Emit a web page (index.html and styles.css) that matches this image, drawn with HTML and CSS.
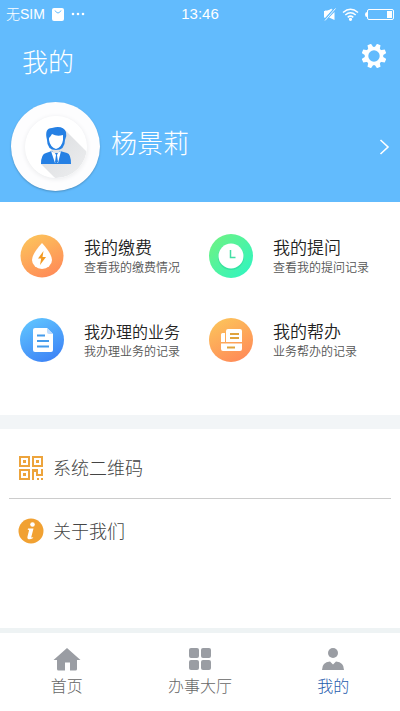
FILE: index.html
```html
<!DOCTYPE html>
<html lang="zh-CN">
<head>
<meta charset="utf-8">
<meta name="viewport" content="width=device-width, initial-scale=1">
<title>我的</title>
<link rel="stylesheet" href="styles.css">
</head>
<body>
<div class="app">
  <header class="hero">
    <div class="status">
      <div class="status-left">
        <span>无SIM</span>
        <svg width="12" height="13" viewBox="0 0 12 13"><rect width="12" height="13" rx="2" fill="#fff"/><path d="M3 2.500q3 5 6 0" fill="none" stroke="#62bbfd"/></svg>
        <svg width="14" height="4" viewBox="0 0 14 4" fill="#fff"><circle cx="2" cy="2" r="1.300"/><circle cx="7" cy="2" r="1.300"/><circle cx="12" cy="2" r="1.300"/></svg>
      </div>
      <time>13:46</time>
      <div class="status-right">
        <svg width="12" height="13" viewBox="0 0 12 13"><path d="M0 3h3l5-2.500L0 10zM10.500 4v8L5 9.500z" fill="#fff"/><path d="M8 1.500L1 9.500V3h3zM11.500 .5L1 12.500" fill="#fff" stroke="#fff" stroke-width=".9"/></svg>
        <svg width="17" height="13" viewBox="0 0 17 13" fill="none" stroke="#fff" stroke-width="1.500"><path d="M1 4.500q7.500-6.500 15 0M3.300 7q5.200-4.500 10.400 0M5.700 9.300q2.800-2.300 5.600 0"/><circle cx="8.500" cy="11.300" r=".9" fill="#fff"/></svg>
        <svg width="29" height="13" viewBox="0 0 29 13"><rect x="2.500" y="1.500" width="26" height="10" rx="1.500" fill="none" stroke="#fff"/><path d="M2 4Q0 4 0 6.500T2 9zM22 3h5v7h-5z" fill="#fff"/></svg>
      </div>
    </div>
    <div class="titlebar">
      <h1>我的</h1>
      <button class="settings" type="button" aria-label="设置">
        <svg width="24" height="24" viewBox="-12 -12 24 24">
          <g fill="#fff"><path id="tooth" d="M-2.800-8L-1.900-12.400h3.800L2.800-8z" transform="rotate(22.500)"/><use href="#tooth" transform="rotate(45)"/><use href="#tooth" transform="rotate(90)"/><use href="#tooth" transform="rotate(135)"/><use href="#tooth" transform="rotate(180)"/><use href="#tooth" transform="rotate(225)"/><use href="#tooth" transform="rotate(270)"/><use href="#tooth" transform="rotate(315)"/></g>
          <circle r="7.500" fill="none" stroke="#fff" stroke-width="3.600"/>
        </svg>
      </button>
    </div>
    <a class="profile" href="#profile">
      <span class="avatar">
        <svg width="62" height="62" viewBox="0 0 62 62">
          <defs><clipPath id="disc"><circle cx="31" cy="31" r="31"/></clipPath><linearGradient id="shade" x1="0" y1="0" x2="1" y2="1"><stop stop-color="#d8dadd"/><stop offset="1" stop-color="#f0f1f2"/></linearGradient></defs>
          <circle cx="31" cy="31" r="31" fill="#fff"/>
          <path clip-path="url(#disc)" d="M40 14L66 40V66H34L16 48z" fill="url(#shade)"/>
          <path d="M22 24Q19 12 27 12Q38 9 41 16Q42 20 40 24Q40 34 31 34Q22 34 22 24z" fill="#2580e4"/>
          <path d="M24 22Q26 20 27 18Q32 21 38 19V24Q37 31 31 33Q25 31 24 24z" fill="#fff"/>
          <path d="M16 48Q16 38 21 37L27 35L31 40L35 35L42 37Q46 38 46 48z" fill="#2580e4"/>
          <path d="M26 35L31 38L36 35L33 47H30z" fill="#fff"/><path d="M30 37h3l-1 2 1 7-2 2-1-2 1-7z" fill="#2580e4"/>
        </svg>
      </span>
      <span class="name">杨景莉</span>
      <svg width="11" height="18" viewBox="0 0 11 18"><path d="M1.500 2L9 9L1.500 16" fill="none" stroke="#fff" stroke-width="1.600"/></svg>
    </a>
  </header>

  <nav class="services" aria-label="我的服务">
    <a class="service" href="#payments">
      <svg width="44" height="44" viewBox="0 0 44 44"><defs><linearGradient id="orange" x1=".2" y1="0" x2=".7" y2="1"><stop stop-color="#fcc45b"/><stop offset="1" stop-color="#ff8b58"/></linearGradient></defs><circle cx="22" cy="22" r="21.500" fill="url(#orange)"/><path d="M22 9Q32 20 32 26A10 9 0 0 1 12 26Q12 20 22 9z" fill="#fff"/><path d="M23.500 17L18 24.500h3.200L20 31l6-8h-3.500z" fill="#f39a22"/></svg>
      <span class="service-text"><span class="service-title">我的缴费</span><span class="service-note">查看我的缴费情况</span></span>
    </a>
    <a class="service" href="#questions">
      <svg width="44" height="44" viewBox="0 0 44 44"><defs><linearGradient id="green" x1="0" y1="0" x2="1" y2="1"><stop stop-color="#73f27f"/><stop offset="1" stop-color="#2bf5c5"/></linearGradient></defs><circle cx="22" cy="22" r="22" fill="url(#green)"/><circle cx="22" cy="23" r="13" fill="#21cf99" opacity=".45"/><circle cx="22" cy="22" r="12.500" fill="#fff"/><path d="M21.500 16v7.500h5" fill="none" stroke="#43dea4" stroke-width="1.500"/></svg>
      <span class="service-text"><span class="service-title">我的提问</span><span class="service-note">查看我的提问记录</span></span>
    </a>
    <a class="service" href="#business">
      <svg width="44" height="44" viewBox="0 0 44 44"><defs><linearGradient id="blue" x1=".2" y1="0" x2=".7" y2="1"><stop stop-color="#60c5ff"/><stop offset="1" stop-color="#3d83f6"/></linearGradient></defs><circle cx="22" cy="22" r="22" fill="url(#blue)"/><path d="M15 10h12l6 6v16q0 2-2 2H15q-2 0-2-2V12q0-2 2-2z" fill="#fff"/><path d="M27 10v4q0 2 2 2h4z" fill="#bddcff"/><path d="M17 17.500h8M17 23h12M17 28.500h12" stroke="#459cec" stroke-width="2"/></svg>
      <span class="service-text"><span class="service-title long">我办理的业务</span><span class="service-note">我办理业务的记录</span></span>
    </a>
    <a class="service" href="#assistance">
      <svg width="44" height="44" viewBox="0 0 44 44"><circle cx="22" cy="22" r="22" fill="url(#orange)"/><path d="M19 11h12q2 0 2 2v11H17V13q0-2 2-2zM13.500 15H16v9h-4v-7.500q0-1.500 1.500-1.500zM12 25.500h21V31q0 2-2 2H14q-2 0-2-2z" fill="#fff"/><path d="M21 16h9M21 20h9M18 29.500h8" stroke="#e0a33c" stroke-width="1.800"/></svg>
      <span class="service-text"><span class="service-title">我的帮办</span><span class="service-note">业务帮办的记录</span></span>
    </a>
  </nav>

  <nav class="links" aria-label="更多">
    <a class="link" href="#qrcode">
      <svg width="26" height="26" viewBox="0 0 26 26"><g fill="none" stroke="#eda43c" stroke-width="2"><path d="M2 2h9v9H2zM15 2h9v9h-9zM2 15h9v9H2z"/></g><path fill="#eda43c" d="M5 5h3v3H5zM18 5h3v3h-3zM5 18h3v3H5zM14 14h6v5h3v-5h2v7h-7v-4h-2v8h-2zM19 23h2v2h-2zM23 23h2v2h-2z"/></svg>
      <span>系统二维码</span>
    </a>
    <a class="link" href="#about">
      <svg width="26" height="26" viewBox="0 0 26 26"><circle cx="13" cy="13" r="12.500" fill="#f1a132"/><circle cx="14.500" cy="6.500" r="2.300" fill="#fff"/><path d="M10 10.500h5.500L13.300 19q-.2 1 2 0l-.5 1.300q-3 1.700-4.800.7-1-.6-.5-2.500l1.500-6q.2-1-1.300-.8z" fill="#fff"/></svg>
      <span>关于我们</span>
    </a>
  </nav>

  <nav class="tabs" aria-label="主导航">
    <a class="tab" href="#home"><svg width="28" height="26" viewBox="0 0 28 26"><path d="M14 2L27.500 14H24v9q0 1.500-1.500 1.500H17v-8h-5v8H5.500Q4 24.500 4 23v-9H.5z" fill="#9a9da3"/></svg><span>首页</span></a>
    <a class="tab" href="#hall"><svg width="28" height="26" viewBox="0 0 28 26" fill="#9a9da3"><rect x="3" y="2" width="10" height="10" rx="2"/><rect x="15" y="2" width="10" height="10" rx="2"/><rect x="3" y="14" width="10" height="10" rx="2"/><rect x="15" y="14" width="10" height="10" rx="2"/></svg><span>办事大厅</span></a>
    <a class="tab active" href="#mine" aria-current="page"><svg width="28" height="26" viewBox="0 0 28 26" fill="#9a9da3"><circle cx="14" cy="7" r="5"/><path d="M3 24q0-8 8-8.500l3 3 3-3q8 .5 8 8.500z"/></svg><span>我的</span></a>
  </nav>
</div>
</body>
</html>
```
FILE: styles.css
```css
* { box-sizing: border-box; }
body {
  margin: 0;
  background: #fff;
  font-family: "Noto Sans CJK SC", sans-serif;
  font-weight: 300;
}
a { color: inherit; text-decoration: none; }
svg { display: block; flex: none; }
.app { min-height: 100vh; display: flex; flex-direction: column; }

.hero { background: #62bbfd; color: #fff; padding-bottom: 11px; }
.status {
  display: grid;
  grid-template-columns: 1fr auto 1fr;
  align-items: center;
  height: 28px;
  padding: 0 6px;
  font-family: "Liberation Sans", "Noto Sans CJK SC", sans-serif;
  font-size: 15px;
  line-height: 28px;
}
.status-left { display: flex; align-items: center; gap: 7px; }
.status-left span { font-size: 14px; }
.status-right { display: flex; align-items: center; justify-content: flex-end; gap: 6px; }

.titlebar {
  display: flex;
  align-items: center;
  justify-content: space-between;
  height: 56px;
  padding: 0 14px 0 22px;
}
h1 { margin: 10px 0 0; font-size: 26px; font-weight: 300; line-height: 36px; }
.settings { padding: 0; border: 0; background: none; cursor: pointer; }

.profile { display: flex; align-items: center; margin-top: 18px; padding: 0 10px 0 11px; }
.avatar {
  display: grid;
  place-items: center;
  width: 89px;
  height: 89px;
  border-radius: 50%;
  background: #fdfdfe;
  box-shadow: 0 1px 2px #4a90c4;
}
.avatar svg { border-radius: 50%; box-shadow: 0 1px 5px #e9eaec; }
.name { flex: 1; padding: 0 0 10px 11px; font-size: 26px; line-height: 36px; }

.services {
  display: grid;
  grid-template-columns: 189fr 191fr;
  row-gap: 40px;
  padding: 32px 0 53px 20px;
}
.service { display: flex; align-items: center; gap: 20px; }
.service-text { display: flex; flex-direction: column; }
.service-title { color: #222; font-size: 17px; font-weight: 350; line-height: 22px; }
.service-title.long { font-size: 16px; }
.service-note { color: #555; font-size: 12px; font-weight: 350; line-height: 18px; }

.links {
  flex: 1;
  padding: 9px 9px 0;
  border-top: 14px solid #f2f5f7;
}
.link {
  display: flex;
  align-items: center;
  gap: 9px;
  height: 60px;
  padding-left: 9px;
  color: #444;
  font-size: 18px;
  line-height: 24px;
}
.link + .link { height: 64px; border-top: 1px solid #ccc; }
.link span { padding-bottom: 2px; }

.tabs {
  display: grid;
  grid-template-columns: repeat(3, 1fr);
  padding: 13px 0 14px;
  border-top: 5px solid #eef3f4;
}
.tab {
  display: flex;
  flex-direction: column;
  align-items: center;
  gap: 1px;
  color: #666;
  font-size: 16px;
  line-height: 24px;
}
.tab.active { color: #1f5cad; }
```
